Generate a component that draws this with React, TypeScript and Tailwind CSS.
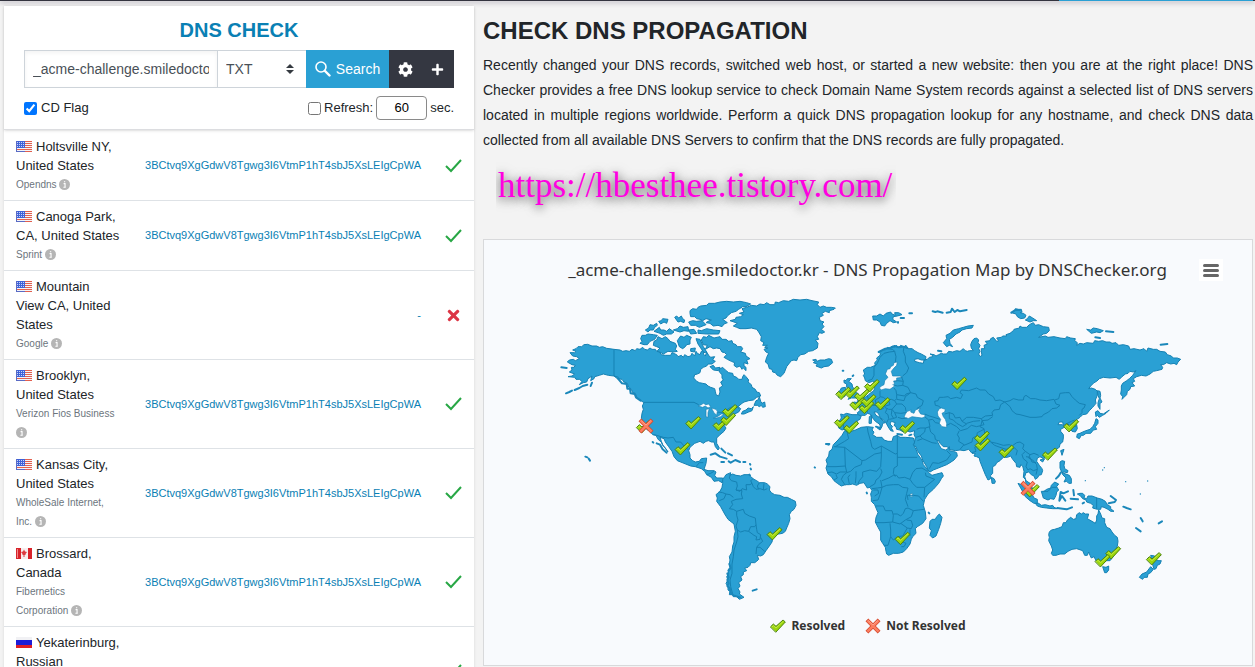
import { FaCog, FaPlus, FaTimes } from 'react-icons/fa'

type Country = 'us' | 'ca' | 'ru'

const TOKEN = '3BCtvq9XgGdwV8Tgwg3I6VtmP1hT4sbJ5XsLEIgCpWA'

const servers: { country: Country; place: string; provider: string; value: string | null }[] = [
  { country: 'us', place: 'Holtsville NY, United States', provider: 'Opendns', value: TOKEN },
  { country: 'us', place: 'Canoga Park, CA, United States', provider: 'Sprint', value: TOKEN },
  { country: 'us', place: 'Mountain View CA, United States', provider: 'Google', value: null },
  { country: 'us', place: 'Brooklyn, United States', provider: 'Verizon Fios Business', value: TOKEN },
  { country: 'us', place: 'Kansas City, United States', provider: 'WholeSale Internet, Inc.', value: TOKEN },
  { country: 'ca', place: 'Brossard, Canada', provider: 'Fibernetics Corporation', value: TOKEN },
  { country: 'ru', place: 'Yekaterinburg, Russian Federation', provider: 'Skydns', value: TOKEN },
]

function Flag({ country }: { country: Country }) {
  return (
    <svg viewBox="0 0 16 11" className="mr-1 inline-block h-[11px] w-4 align-[-1px]" aria-hidden="true">
      {country === 'us' && (
        <>
          <rect width="16" height="11" fill="#f4f4f8" />
          {[0, 2, 4, 6, 8, 10].map((y) => (
            <rect key={y} y={y} width="16" height="1" fill="#e2604f" />
          ))}
          <rect width="9" height="7" fill="#3f62d8" />
          {[1, 3, 5].map((y) => (
            <path key={y} d={`M1 ${y + 0.5}H8`} stroke="#c9d4fa" strokeWidth="1" strokeDasharray="1 1" />
          ))}
          <path d="M.5 0V11M0 10.5H9" stroke="#5a6bc4" strokeWidth="1" />
        </>
      )}
      {country === 'ca' && (
        <>
          <rect width="16" height="11" fill="#f6eeee" />
          <rect width="5" height="11" fill="#d8232a" />
          <rect x="12" width="4" height="11" fill="#d8232a" />
          <rect x="1" y="1" width="1" height="9" fill="#f0888a" />
          <path d="M8 1.5L9 3.5L11 4L9.5 6L9.5 7H8.5V9H7.5V7H6.5V6L5 4L7 3.5Z" fill="#dc3a3f" />
        </>
      )}
      {country === 'ru' && (
        <>
          <rect width="16" height="11" fill="#f1f1f4" />
          <rect y="3" width="16" height="5" fill="#1c1cd8" />
          <rect y="8" width="16" height="3" fill="#e01f26" />
        </>
      )}
    </svg>
  )
}

function InfoIcon() {
  return (
    <svg viewBox="0 0 12 12" className="inline-block h-[11px] w-[11px] align-[-2px]" aria-hidden="true">
      <circle cx="6" cy="6" r="6" fill="#b5b5b5" />
      <path d="M5 5H6.6V9M4.8 9H7.4M5.4 3H6.8" stroke="#fff" strokeWidth="1.2" fill="none" />
    </svg>
  )
}

// Puts a list of points into the map's own coordinates.
const at = (dx: number, dy: number, points: string) =>
  points
    .trim()
    .split(/\s+/)
    .map((p) => {
      const [x, y] = p.split(',').map(Number)
      return `${x + dx},${y + dy}`
    })
    .join(' ')

const west = (p: string) => at(0, 0, p)
const europe = (p: string) => at(720, 0, p)
const asia = (p: string) => at(1320, 0, p)
const south = (p: string) => at(420, 480, p)
const pacific = (p: string) => at(1320, 480, p)

const eurasia = [
  europe(`182,402 190,404 200,400 216,404 234,404 232,398 240,392 240,386 234,380 224,378 216,370 222,366 232,368 232,362 240,364 244,356 252,354 264,346 272,338 280,334 284,326
    280,318 284,308 278,304 266,308 256,302 254,294 250,286 254,282 250,270 262,262 272,262 286,256 284,248 292,240 290,234 300,226 302,220 294,216 304,214 310,208 316,210 322,202 330,204
    336,198 344,202 348,196 356,202 362,196 372,200 378,196 384,206 396,206 404,212 414,218 424,222 438,230 436,240 424,240 414,236 404,238 404,244 418,248 430,250 432,240 442,238
    448,232 458,230 456,224 450,222 462,224 468,228 476,224 484,220 490,222 500,222 506,214 518,216 530,212 540,214 550,206 556,212 562,214 568,212 580,212 574,204 572,194 576,184 582,176 590,174
    596,180 594,188 600,196 596,206 600,214 596,222 600,230 606,226 604,216 604,206 614,206 612,196 622,192 616,184 630,182 632,176 640,172 650,184
    656,182 650,174 664,172 668,168 680,168 678,164 690,160 700,152`),
  asia(`102,148 118,144 120,138 126,142 140,142 148,134 160,128 166,136 176,134 190,140 206,142 208,152 200,160 190,162 176,172 196,168 204,172 222,170 240,174 256,176 260,170
    272,174 286,176 284,182 292,188 290,196 300,190 310,192 320,188 340,190 344,182 356,184 368,182 378,186 390,186 396,190 408,188 416,196 430,194 446,198 450,208 462,206 480,210 492,206
    500,214 504,204 520,208 530,208 540,214 556,216 562,224 574,228 580,234 592,234 602,238 594,246 590,254 582,250 572,252 560,248 550,254 542,254
    548,262 546,268 530,272 520,274 510,282 498,288 484,286 470,290 460,296 464,304 456,308 464,318 452,320 450,328 442,334 440,344 432,352 426,358 428,350 422,342 424,330 424,318
    428,310 440,302 448,296 458,286 468,272 460,276 450,274 444,280 436,282 426,290 418,298 408,292 390,294 370,292
    358,296 350,304 342,308 332,318 326,326 334,324 346,328 352,334 352,346 346,360 348,370 338,382 328,392 320,402 308,404 300,412 288,420 286,428 290,434
    292,446 286,456 276,454 272,448 274,440 268,434 258,432 250,436 248,426 238,426 234,434 246,434 256,440 242,448 242,454 250,464 250,474 248,486 240,492
    238,502 228,508 220,520 208,526 196,530 190,536 180,530 172,534 170,544 178,556 186,566`),
  pacific(`188,92 184,104 176,106 174,112 166,118 162,108 154,104 146,96 138,98 134,110 138,122 150,130 158,146 148,144 138,130 136,118 130,112 132,94
    128,78 122,74 120,82 110,80 108,70 98,58 92,48 82,52 70,52 60,62 50,68 46,76 38,80 38,100 32,106 32,116 24,120 16,104 8,84 0,64`),
  europe(`600,544 598,534 590,530 582,528 586,520 576,520 566,508 552,512 540,510 526,512 508,508 502,500 490,500 480,490 476,480 472,484 478,496 484,506 496,510 504,506 508,500
    508,512 520,514 530,518 532,528 522,540 510,548 500,554 480,562 460,570 450,576 444,570 440,560 428,540 424,528 412,512 408,500 400,496 404,484 406,472 402,464
    404,452 390,456 380,452 370,456 360,450 350,448 348,440 342,436 346,428 334,424 330,432 338,440 334,444
    340,454 332,452 324,440 318,428 310,420 300,412 296,402 290,396 282,396 288,406 298,412 306,420 316,428 308,430 306,440 300,450 292,444 302,440 298,432 286,424 278,414
    270,402 262,400 256,406 244,406 240,418 232,422 230,432 222,442 210,450 202,454 192,448 186,450 176,444 178,434 176,426 184,414`),
].join(' ')

const land = [
  eurasia,
  // North America
  west(`143,193 132,194 125,200 114,200 108,206 98,210 108,214 104,218 90,218 98,228 110,230 118,236 106,242 100,238 88,240 82,246 96,254 106,256 102,262
    94,262 96,270 88,276 104,282 96,288 84,290 104,292 108,298 118,298 126,304 118,314 130,308 140,306 144,296 156,288 152,302 162,296 164,290 178,286 190,282 205,286
    222,288 232,296 246,298 252,306 262,310 266,322 274,328 278,338 286,340 290,352 300,360 312,368 307,378 310,388 306,400 304,415 308,422 308,432 316,440 320,448 330,454
    338,464 348,466 352,474 356,480
    364,486 368,496 376,504 384,516 378,508 368,494 364,484 360,472 372,476 376,486 386,500 396,514 402,530 412,542 432,550 452,558 466,560 484,566 494,574
    500,584 514,592 522,604 536,602 546,608 556,596 554,602 548,594 530,594 524,586 528,576 522,572 504,572 492,568
    498,550 500,534 484,536 478,544 466,546 458,542 450,534 450,524 446,512 450,502 464,490 480,484 490,490 498,484 506,482 514,486 522,486 526,500
    534,510 538,504 530,490 530,474 540,464 552,454 558,444 552,436 560,430 566,424 566,416 574,410 584,402 596,396 602,386 594,380 606,370 612,366
    626,362 640,360 650,352 662,348 658,338 650,336 646,328 636,322 634,314 624,306 626,300 618,290 612,284 608,290 606,298 596,298 590,292 580,288 578,280 566,278 556,270
    548,262 538,268 538,276 546,284 546,294 550,300 542,306 548,318 538,324 540,336 536,348 528,344 526,334 524,326 512,322 504,318 498,312 488,310 478,308 470,304
    461,294 464,284 472,282 480,278 482,268 490,262 500,258 504,252 516,252 526,244 518,240 524,230 512,232 506,226 500,216 496,228 490,222 492,210 484,214 480,224 472,220 468,214
    464,228 456,220 452,228 444,230 434,224 430,232 424,226 414,230 410,224 396,218 392,226 376,226 364,224 358,216 350,214 346,208 336,208 330,204 322,210
    314,208 308,202 300,208 290,206 286,212 276,208 268,214 258,212 248,214 240,210 222,208 200,205 188,200 178,202 170,198 156,198`),
  // Arctic islands
  west(`474,82 482,78 500,76 506,70 524,70 540,66 560,64 580,66 600,64 620,68 632,72 618,80 608,80 596,88 588,94 574,98 562,108 558,114 548,118 562,128 552,132 546,140 534,136 520,138
    510,130 498,128 504,124 514,120 498,116 488,122 480,118 470,116 464,110 452,110 450,100 450,92 458,86 470,88`),
  west('474,150 484,152 500,146 520,150 540,152 536,162 500,162 474,160'),
  west('342,184 350,180 354,170 366,176 376,170 384,176 390,184 406,190 410,198 406,208 412,214 400,216 384,214 370,222 352,212 360,204 350,200 340,196'),
  west('300,190 306,184 302,176 306,166 316,166 324,162 340,164 352,166 344,178 330,184 322,194 312,194'),
  west('342,154 358,142 362,150 372,150 380,154 388,146 402,156 394,162 380,162 370,166 360,160'),
  west('316,150 326,144 330,134 340,136 350,130 352,136 344,142 340,150 330,150 324,156'),
  west('356,124 364,122 368,116 384,118 380,130 372,126 362,132'),
  west('404,112 410,108 416,114 424,108 428,116 434,120 432,128 422,124 414,126'),
  west('400,150 412,146 420,138 430,142 444,140 446,154 432,152 420,156'),
  west('446,126 458,122 470,124 486,122 498,134 478,142 466,136 452,136'),
  west('412,182 422,168 432,172 440,166 454,172 450,180 450,192 440,194 436,200 428,206 418,200'),
  west('446,150 462,148 470,160 452,162'),
  west('452,206 466,204 464,216 452,214'),
  west(`484,180 490,170 500,172 506,166 522,174 540,170 546,178 558,178 566,184 576,182 578,190 588,194 592,200 604,200 608,206 602,216 616,220 618,228 630,236 620,240 624,252 612,248
    612,258 618,262 618,272 610,264 606,268 600,258 590,262 582,256 584,248 574,244 562,238 552,232 560,224 554,218 546,216 540,206 530,204 520,206 510,200 496,208 502,196 490,194`),
  west('468,176 480,178 490,200 500,216 492,218 482,204 474,192'),
  west('510,260 520,256 526,264 540,262 536,272 520,270'),
  west('604,402 608,394 618,390 624,384 634,386 640,380 636,392 626,396 612,402'),
  west('642,376 648,362 654,360 658,350 662,364 666,370 674,366 676,380 668,382 664,376 658,380 652,376'),
  // Greenland
  west(`570,122 586,118 588,112 602,110 610,104 598,100 612,96 606,86 620,82 634,76 650,78 660,72 672,74 680,68 690,74 704,74 706,66 716,68 730,62 746,64 760,58 780,60 800,58 816,62 836,66 832,74
    840,82 850,78 860,82 874,82 886,84 882,88 868,92 868,98 856,94 846,100 850,106 838,112 840,122 852,126 846,132 852,140 844,148 854,156 846,160 838,158 832,170
    836,178 826,180 834,190 832,204 818,212 806,214 794,222 782,224 774,232 770,242
    762,240 754,242 746,252 740,260 732,280 722,290 712,286 706,278 698,276 696,268 688,266 684,252 676,246 680,232 686,220 678,216 672,208 684,204 674,202 682,196 668,196 672,188 662,182 664,170
    656,156 650,148 634,144 618,146 600,146 590,142 580,138 592,130 582,126`),
  // South America
  south(`128,118 134,110 138,104 152,98 150,106 158,102 168,106 182,108 192,104 208,104 212,110 222,118 230,122 238,128 254,128 262,132 270,140 268,150 274,158 284,164 300,166
    312,172 322,172 334,178 346,184 348,196 342,208 334,214 328,224 330,236 326,250 320,264 316,274 308,280 296,282 286,286 278,296 276,306 268,318 258,332 250,344 242,348 232,346
    236,358 230,364 224,368 212,368 210,376 204,382 194,384 200,392 190,396 190,404 182,410 186,420 176,428 180,438 174,446 180,456 178,462 192,472 178,478 170,470 160,470 158,464 148,464 150,454
    144,450 144,440 138,430 144,420 140,410 146,402 144,390 150,382 148,372 150,360 148,350 156,336 158,318 162,306 162,290 166,274 162,252 144,238 134,222 122,200 110,184 112,174 108,164 120,154 126,142 128,130`),
  // Africa
  south(`474,0 486,-14 494,-28 508,-24 526,-30 544,-38 562,-40 580,-38 576,-30 582,-24 578,-16 590,-8 606,-8 612,0 624,4 636,4 640,-10 652,-14 660,-8 676,-8 700,-6 704,6 700,14 708,28 714,44 726,60 730,74
    742,88 746,98 756,106 770,102 786,98 790,108 784,116 776,130 760,148 744,162 734,178 730,196 736,216 738,236 728,250 712,260 706,266 708,280 698,290 694,298
    690,312 680,326 670,336 656,340 640,340 626,346 620,342 618,334 616,322 608,310 602,300 602,276 594,262 586,246 588,232 594,218 588,204 584,194 574,184 574,172 572,162
    576,152 570,142 562,144 552,128 540,130 530,136 518,132 508,134 496,134 484,138 472,130 462,122 454,110 444,102 438,84 442,72 438,60 446,48 448,34 456,28 460,14`),
  south('750,244 756,238 766,238 770,230 778,222 786,232 782,250 776,268 768,288 758,294 750,286 754,272 748,264'),
  europe('100,248 106,244 98,240 108,238 112,244 120,240 134,240 146,236 154,238 158,248 146,258 132,260 124,264 108,258 112,252'),
  europe('192,300 198,302 202,296 214,296 206,304 216,312 218,322 226,328 226,336 236,342 230,354 214,354 204,358 214,346 204,342 212,336 208,326 200,322 200,312 192,308'),
  europe('174,336 180,332 184,324 196,322 200,336 194,350 176,352'),
  europe('278,108 290,108 300,102 310,108 318,100 332,96 336,102 346,106 344,98 356,98 366,104 352,108 340,110 338,118 350,126 340,128 330,122 320,130 314,138 304,136 300,126 290,120 280,120'),
  europe('490,188 500,176 498,166 510,160 520,150 536,146 550,142 564,138 580,136 576,144 560,146 546,150 540,156 528,162 518,172 508,178 510,190 518,200 508,196 500,200'),
  europe('268,410 275,406 274,430 267,430'),
  asia('94,98 104,92 106,86 116,88 124,88 126,96 120,98 130,100 138,106 134,114 122,116 112,110 108,102'),
  asia('136,120 142,116 148,108 158,114 170,122 160,122 150,126'),
  asia('320,148 332,150 340,144 352,146 370,152 360,158 350,156 334,160'),
  asia('352,332 360,334 362,346 360,354 366,366 360,370 360,388 354,378 354,368 358,356 354,346'),
  asia('346,396 354,392 360,400 370,402 388,390 378,400 368,406 358,412 352,406 348,410'),
  asia('348,416 354,420 354,430 346,440 350,448 340,450 332,460 318,460 310,466 304,466 298,476 290,472 292,462 300,460 308,456 318,452 330,448 338,440 344,430'),
  asia('242,512 252,508 246,526'),
  asia('180,540 194,536 188,546'),
  pacific('34,112 42,116 46,124 44,130 36,130'),
  pacific('240,66 246,62 254,64 252,76 254,86 264,92 262,98 252,96 246,98 268,106 274,116 274,130 266,130 260,124 252,126 258,114 248,104 240,84'),
  pacific('114,130 124,134 130,142 140,150 146,160 158,166 162,174 172,178 172,190 162,190 150,182 136,170 130,158'),
  pacific('166,190 176,190 184,196 196,194 210,198 218,196 222,202 232,206 218,206 200,204 184,202 172,198'),
  pacific('184,154 192,154 200,148 212,144 214,136 224,126 236,132 230,140 236,150 230,156 228,166 222,178 212,176 204,180 190,174'),
  pacific(`292,162 300,160 308,160 314,166 312,174 320,176 324,168 336,168 352,174 366,178 376,184 382,194 392,200 392,206 402,214 392,214 384,208 372,202 364,200 362,208 352,208 338,204
    340,196 332,190 320,186 318,180 308,176 302,168`),
  pacific(`208,276 214,270 224,268 236,264 246,260 250,248 258,248 262,240 272,232 280,238 288,236 290,224 298,218 304,222 310,218 316,222 326,222 322,236 336,244 346,250 350,240 350,228 354,222 356,210 362,222 366,234
    374,236 374,248 380,262 390,266 396,276 404,286 412,292 414,304 412,318 406,332 400,350 390,362 380,362 372,368 360,364 350,366 342,350 334,354 330,346 326,336 322,346 314,346 308,332 290,326 276,328 264,334 254,342 240,342
    228,346 218,346 214,340 218,330 214,318 206,302 208,292 206,284`),
  pacific('368,380 378,382 386,378 386,390 380,398 374,398'),
  pacific('512,346 524,348 524,356 534,362 544,362 540,372 532,376 528,386 522,388 518,374'),
  pacific('512,380 520,388 512,398 504,402 502,412 492,412 488,418 478,412 486,402 500,396'),
]

const water = [
  // Baltic
  europe('352,246 342,248 340,256 332,260 330,266 322,268 316,282 324,292 314,302 312,314 304,318 298,324 304,330 316,326 330,328 344,318 342,304 350,304 350,294 368,292 360,288 338,288 334,274 342,264 350,256'),
  // Black Sea, Caspian
  europe('372,412 376,402 382,394 394,390 392,396 402,400 406,390 422,384 416,392 422,402 434,404 436,410 426,414 410,412 396,410 384,416'),
  europe('472,396 478,386 484,384 496,388 494,396 486,400 490,410 496,418 500,430 500,442 486,440 478,430 482,418 474,408'),
  // Great Lakes
  west('474,378 484,374 490,370 498,374 506,372 512,380 504,384 496,378 488,382'),
  west('498,388 508,386 504,398 504,412 498,410'),
  west('514,384 528,388 532,394 530,406 522,398'),
  west('520,414 532,410 544,402 552,402 542,410 530,414'),
  south('690,162 698,160 698,170 690,170'),
]

const borders = [
  west('222,208 222,288 236,292'),
  west('312,367 462,367 476,374'),
  west('532,396 548,398 572,382 590,378 596,386'),
  west('340,464 350,466 370,472 384,474 400,472 408,486 422,486 434,500 446,510'),
  west('468,560 478,548 490,548'),
  west('500,584 512,580 522,574'),
  south('152,100 148,114 154,122 170,126 172,138 168,150 186,152 184,162 188,176 168,178 154,184 158,194 148,206 160,208 170,214'),
  south('116,156 128,158 138,162 132,176 118,182'),
  south('138,162 150,164 160,172'),
  south('168,150 180,154 186,146 200,150 198,134 210,134 216,130 220,140 228,148 240,146 252,150 262,146'),
  south('216,130 212,122 218,118'),
  south('238,128 232,138 236,148'),
  south('252,130 250,150'),
  south('170,214 190,208 194,220 208,228 226,234 228,254 224,260 212,260 206,274 194,272 182,276 172,270 168,258 174,240 170,226 170,214'),
  south('172,270 174,290 170,306 162,330 160,350 156,372 156,400 150,420 152,440 158,462'),
  south('206,274 222,286 230,290 228,300 240,298 242,284 232,278 230,268 228,254'),
  south('242,292 248,304 236,314 230,322 228,342'),
  south('230,322 240,322 254,334'),
  south('462,20 494,22 496,78 468,80 442,80'),
  south('500,-28 506,-4 494,4 480,12 466,20'),
  south('494,22 546,62 556,60 584,42 604,38'),
  south('562,-38 564,-24 572,4 576,22 584,28 604,18'),
  south('604,18 646,42 652,40 652,-14'),
  south('652,52 712,52'),
  south('652,40 652,78 642,84 640,100 646,110'),
  south('604,18 604,48 602,80 590,94 570,90 548,96'),
  south('546,62 544,74 524,82 512,94 500,98'),
  south('496,78 500,96 480,96 470,102 456,96 442,98'),
  south('548,96 548,110 538,122 534,132'),
  south('500,98 490,106 484,118 496,136'),
  south('468,104 472,114 462,120'),
  south('510,104 504,112 508,132'),
  south('528,94 528,110 526,130'),
  south('602,86 606,96 598,112 588,120 584,132 570,140'),
  south('602,120 606,142 592,144 576,146'),
  south('606,122 626,114 640,106 650,106 656,114 674,112 690,118 698,130 710,142 734,142 764,118 738,108 736,98'),
  south('690,118 698,98 708,86 726,84 742,94'),
  south('606,142 620,136 640,134 656,134 668,142 684,144 680,160 676,178 684,200'),
  south('578,182 594,180 600,164 606,142'),
  south('580,150 594,150 596,160 584,168'),
  south('588,198 610,198 616,212 636,212 640,226 638,246 612,248 586,248'),
  south('640,222 652,222 662,228 670,220 676,206 684,204 700,212 694,230 676,240 660,252 638,246'),
  south('700,212 716,210 732,208'),
  south('684,180 682,166 700,166 716,168 730,184'),
  south('734,142 732,172'),
  south('630,250 632,270 632,290 624,316 612,316'),
  south('632,290 640,300 652,290 668,288 682,264 662,250'),
  south('682,264 694,266 698,256 694,242 680,240'),
  south('690,268 690,288'),
  south('662,314 668,306 678,310 672,320 664,320'),
  europe('264,302 276,298 282,286 282,262 292,250 300,232 312,220 328,216 344,214 348,230 346,246'),
  europe('372,198 370,214 376,230 376,246 386,264 380,278 368,288'),
  europe('344,214 338,208 322,206'),
  europe('364,290 370,304 352,302 340,304'),
  europe('370,304 368,316 352,318 338,314'),
  europe('368,316 384,322 392,338 378,342 374,348 350,344 348,332 342,324'),
  europe('300,332 300,350 310,352 320,360 334,358 344,362 350,356 350,344'),
  europe('262,346 266,360 264,368 278,376 288,374 286,360 300,352'),
  europe('278,376 294,376 310,380 330,374 326,362'),
  europe('350,358 372,362 376,350 392,338 408,342 412,352 430,362 426,376 410,386'),
  europe('344,362 350,372 336,388 326,388 314,382'),
  europe('350,372 366,372 376,382 378,394'),
  europe('336,388 344,398 362,400 378,398'),
  europe('344,398 350,412 338,416 328,418'),
  europe('322,384 316,398 324,404 326,416 320,428'),
  europe('336,388 334,404 340,414'),
  europe('292,390 304,388 312,384'),
  europe('238,380 250,386 262,390 262,398'),
  europe('234,404 244,408'),
  europe('192,408 196,420 190,432 192,448'),
  europe('354,412 366,416 382,414'),
  europe('434,410 446,420 450,440 436,444 420,444 410,448'),
  europe('434,402 448,408 462,412 480,418'),
  europe('446,420 458,418 466,428 478,430'),
  europe('482,384 476,378 466,376 464,364 474,362 478,352 490,352 504,350 512,356 530,352 542,356 548,344 540,338 544,330 566,332 590,324 600,330 616,330 626,342 640,350 646,362 660,360 674,366'),
  europe('674,366 662,374 658,388 642,390 636,398 638,406 616,408 604,416 580,412 560,412 546,424 540,412 526,414 520,402 508,398 494,402'),
  europe('508,398 508,416 520,420 530,430 548,440 560,432 546,424'),
  europe('500,436 512,430 530,440 542,452 562,446 574,436 590,440 612,434 604,416'),
  europe('560,430 580,424 600,422'),
  europe('448,440 452,456 464,466 466,478 476,484'),
  europe('538,452 532,464 538,474 536,484 552,494 540,508'),
  europe('552,496 576,486 578,474 590,468 592,458 612,448'),
  europe('436,444 434,456 420,468 428,476 412,482'),
  europe('420,468 408,472'),
  europe('428,476 456,488 470,490'),
  europe('448,566 458,548 476,550 500,540 512,524 500,512'),
  europe('576,518 588,514 584,502 600,494 608,478 606,468 620,458'),
  asia('74,366 90,362 100,356 116,360 130,360 132,350 138,346 152,356 166,356 180,360 200,362 222,358 228,372 240,376 230,384 216,386 206,396 190,404 186,410 168,412 150,412 120,404 108,402 96,392 90,380 74,366'),
  asia('224,360 236,356 240,340 256,338 268,338 276,350 286,360 298,370 316,374 312,384 306,388 306,398 298,406'),
  asia('38,410 24,420 6,422 4,432 0,440 12,446 14,460 24,462 20,474 32,486 50,490 70,496 88,494 96,498 110,488 120,486 132,494 128,506 136,514 150,524 162,520 176,526'),
  asia('32,486 44,496 60,502 78,508 92,506'),
  asia('96,506 104,504 112,512 108,526'),
  asia('136,514 126,524 130,536 142,546 138,560 144,570'),
  asia('150,524 146,534 158,540 170,554 172,568 160,572 150,566 144,570'),
  asia('138,530 150,532 156,546 168,548'),
  asia('172,568 168,584'),
  asia('258,432 266,428 274,424 284,420'),
  asia('274,442 290,438'),
  pacific('350,174 350,206'),
  pacific('190,154 204,154 216,142 230,142'),
]

// Chains of small islands and rough bits of coast, drawn as thick strokes.
const islands = [
  west('78,340 88,336 96,332'),
  west('104,330 118,324 128,318 142,314'),
  west('64,262 80,264'),
  west('156,308 152,318'),
  west('234,296 246,310 260,312 262,326 270,326 272,340 284,342 288,352 302,362'),
  west('350,490 360,494 368,508 380,518'),
  west('338,486 340,488'),
  west('136,530 142,532'),
  west('146,536 150,542'),
  west('512,524 526,520 540,530 560,536'),
  west('566,544 572,548 586,540 600,546'),
  west('544,546 552,546'),
  west('544,506 556,518'),
  west('564,520 576,526'),
  west('610,546 616,546'),
  west('630,552 631,554'),
  west('632,566 633,568'),
  west('628,584 630,586'),
  south('142,400 146,412 142,420 146,430 142,438 150,446 152,458 160,466 180,472'),
  south('148,372 152,384 146,392'),
  south('218,452 230,448'),
  south('440,12 446,14'),
  south('404,82 405,83'),
  south('560,158 561,160'),
  south('746,218 748,220'),
  europe('188,272 190,272'),
  europe('218,288 220,286'),
  europe('296,216 316,206 330,204 344,198 356,202 370,200 382,204'),
  europe('458,94 466,96 472,94 488,98'),
  europe('500,98 512,96 516,86 524,96 532,90 540,94 560,90'),
  europe('388,100 396,100'),
  europe('362,114 372,114'),
  europe('354,126 356,142'.replace('356,142', '354,128')),
  europe('474,212 484,214'),
  europe('694,98 706,90 720,90'),
  europe('352,462 366,464'),
  europe('388,466 394,464'),
  europe('288,440 300,444'),
  europe('138,492 148,492'),
  asia('378,154 400,156'),
  asia('346,172 360,174'),
  asia('542,194 562,192'),
  pacific('228,116 236,108 242,98'),
  pacific('232,204 248,206 260,208 276,202'),
  pacific('264,154 250,160 242,156 238,182 246,168 256,182'),
  pacific('280,150 282,166'),
  pacific('272,176 294,178'),
  pacific('308,190 312,188'),
  pacific('392,168 408,180 404,186 386,190'),
  pacific('430,200 440,204 452,208'),
  pacific('482,234 488,244'),
  pacific('468,264 482,274'),
  pacific('536,250 546,244'),
]

// Islets too small for an outline
const islets: [number, number][] = [
  [1636, 602], [1688, 570], [1693, 563], [1757, 605], [1823, 603], [1801, 642],
]

const resolved: [number, number][] = [
  [460, 428], [570, 392], [542, 434], [565, 418], [428, 506], [312, 440],
  [936, 336], [910, 340], [966, 346], [996, 317], [952, 372], [980, 382], [986, 362], [1028, 371],
  [906, 425], [934, 442], [1102, 442], [1258, 310], [1328, 494], [1326, 472], [1400, 514],
  [1594, 437], [1530, 522], [704, 761], [1088, 775], [1476, 632], [1720, 818], [1688, 842], [1842, 836],
]

const unresolved: [number, number][] = [
  [318, 438],
  [1464, 625],
]

function TickShape() {
  return (
    <g strokeLinejoin="round" strokeLinecap="round">
      <path d="M-22 2L-14 -6L-6 1L15 -18L22 -12L-6 18Z" fill="#9bd60a" stroke="#4e8410" strokeWidth="3" />
      <path d="M-17 2L-14 -1L-6 6L16 -14" fill="none" stroke="#d3f068" strokeWidth="2" />
    </g>
  )
}

function CrossShape() {
  return (
    <g strokeLinecap="square">
      <path d="M-14 -14L14 14M14 -14L-14 14" stroke="#d4472c" strokeWidth="12" />
      <path d="M-14 -14L14 14M14 -14L-14 14" stroke="#fb7d60" strokeWidth="8" />
      <path d="M-13 -15L0 -3L13 -15" fill="none" stroke="#ffb5a2" strokeWidth="2" />
    </g>
  )
}

function WorldMap() {
  return (
    <svg viewBox="0 6 1950 990" className="block w-full" role="img" aria-label="World map of DNS servers">
      <g fill="#2aa0d4" stroke="#1581b3" strokeWidth="3" strokeLinejoin="round">
        {land.map((points, i) => (
          <polygon key={i} points={points} />
        ))}
      </g>
      <g fill="#f8fafd" stroke="#1581b3" strokeWidth="2">
        {water.map((points, i) => (
          <polygon key={i} points={points} />
        ))}
      </g>
      <g fill="none" stroke="#1581b3" strokeWidth="3" strokeLinejoin="round">
        {borders.map((points, i) => (
          <polyline key={i} points={points} />
        ))}
      </g>
      <g fill="none" stroke="#1a87ba" strokeWidth="6" strokeLinejoin="round" strokeLinecap="round">
        {islands.map((points, i) => (
          <polyline key={i} points={points} />
        ))}
      </g>
      {islets.map(([x, y], i) => (
        <circle key={i} cx={x} cy={y} r="2" fill="#1a87ba" />
      ))}
      {resolved.map(([x, y], i) => (
        <g key={i} transform={`translate(${x} ${y})`}>
          <TickShape />
        </g>
      ))}
      {unresolved.map(([x, y], i) => (
        <g key={i} transform={`translate(${x} ${y})`}>
          <CrossShape />
        </g>
      ))}
    </svg>
  )
}

function SearchPanel() {
  return (
    <form className="border-b border-[#dcdde0] px-5 pt-[11px] shadow-sm" onSubmit={(e) => e.preventDefault()}>
      <h1 className="text-center text-[20px] leading-[26px] font-bold text-[#0a80b4]">DNS CHECK</h1>
      <div className="mt-[7px] flex h-[38px]">
        <input
          type="text"
          aria-label="Domain name"
          defaultValue="_acme-challenge.smiledoctor.kr"
          className="min-w-0 flex-1 border border-[#ced4da] px-2 text-[14px] text-[#495057] shadow-inner outline-none"
        />
        <div className="relative w-[88px]">
          <select
            aria-label="Record type"
            defaultValue="TXT"
            className="h-full w-full appearance-none border-y border-[#ced4da] bg-white pl-2 text-[14px] text-[#495057] outline-none"
          >
            <option>A</option>
            <option>TXT</option>
            <option>MX</option>
          </select>
          <svg viewBox="0 0 8 10" className="pointer-events-none absolute top-[14px] right-3 h-[10px] w-2" aria-hidden="true">
            <path d="M4 0L8 4H0ZM4 10L8 6H0Z" fill="#343a40" />
          </svg>
        </div>
        <button type="submit" className="flex w-[83px] items-center justify-center gap-[5px] bg-[#2aa0d4] text-[14px] text-white">
          <svg viewBox="0 0 16 16" className="h-4 w-4" fill="none" stroke="currentColor" aria-hidden="true">
            <circle cx="6" cy="6" r="5" strokeWidth="1.6" />
            <path d="M10 10L14.5 14.5" strokeWidth="2.4" strokeLinecap="round" />
          </svg>
          Search
        </button>
        <button type="button" aria-label="Settings" className="flex w-8 items-center justify-center bg-[#343741] text-white">
          <FaCog size={15} />
        </button>
        <button type="button" aria-label="Add server" className="flex w-[33px] items-center justify-center bg-[#343741] text-white">
          <FaPlus size={13} />
        </button>
      </div>
      <div className="flex items-center justify-between pt-2 pb-[9px] text-[13px] leading-6 text-[#212529]">
        <label className="flex items-center gap-1">
          <input type="checkbox" defaultChecked className="h-[13px] w-[13px] accent-[#0075ff]" />
          CD Flag
        </label>
        <div className="flex items-center gap-[3px]">
          <input id="refresh" type="checkbox" className="h-[13px] w-[13px]" />
          <label htmlFor="refresh">Refresh:</label>
          <input
            type="text"
            aria-label="Refresh seconds"
            defaultValue="60"
            className="h-6 w-[51px] rounded-[4px] border border-[#8a8a8a] text-center text-[13px] text-black outline-none"
          />
          <span>sec.</span>
        </div>
      </div>
    </form>
  )
}

function ServerList() {
  return (
    <table className="mt-px w-full">
      <tbody>
        {servers.map((server) => (
          <tr key={server.place} className="border-b border-[#dee2e6]">
            <td className="py-[6px] pl-3 align-top text-[13px] leading-[19px] text-[#212529]">
              <div className="w-[104px]">
                <Flag country={server.country} />
                {server.place}
              </div>
              <div className="w-[100px] text-[10px] leading-[19px] text-[#6c757d]">
                {server.provider} <InfoIcon />
              </div>
            </td>
            <td className="text-right text-[11px] text-[#0a80b4]">{server.value ?? '-'}</td>
            <td className="w-[53px] pr-3 pl-6">
              {server.value ? (
                <svg viewBox="0 0 17 14" className="h-[14px] w-[17px]" role="img" aria-label="Resolved">
                  <path d="M1 7L6 12L16 1" fill="none" stroke="#28a745" strokeWidth="2" />
                </svg>
              ) : (
                <FaTimes size={17} className="text-[#dc3545]" aria-label="Not resolved" />
              )}
            </td>
          </tr>
        ))}
      </tbody>
    </table>
  )
}

function PropagationMap() {
  return (
    <section className="border border-[#d8d9db] bg-[#f8fafd] px-1 pb-[29px]">
      <div className="flex items-center pt-[18px]">
        <h3 className="flex-1 pl-12 text-center font-['Noto_Sans','Open_Sans',sans-serif] text-[17px] leading-6 text-[#333]">
          _acme-challenge.smiledoctor.kr - DNS Propagation Map by DNSChecker.org
        </h3>
        <button type="button" aria-label="Chart menu" className="mr-[25px] flex h-[22px] w-6 flex-col items-center justify-center gap-[2px] bg-white">
          <span className="h-[3px] w-4 rounded-full bg-[#666]" />
          <span className="h-[3px] w-4 rounded-full bg-[#666]" />
          <span className="h-[3px] w-4 rounded-full bg-[#666]" />
        </button>
      </div>
      <div className="pr-[58px] pl-[52px]">
        <WorldMap />
      </div>
      <div className="flex justify-center gap-5 pt-1 font-['Noto_Sans','Open_Sans',sans-serif] text-[12px] leading-5 font-bold text-[#333]">
        <span className="flex items-center gap-[5px]">
          <svg viewBox="-24 -21 48 42" className="h-[14px] w-4" aria-hidden="true">
            <TickShape />
          </svg>
          Resolved
        </span>
        <span className="flex items-center gap-[5px]">
          <svg viewBox="-24 -24 48 48" className="h-4 w-4" aria-hidden="true">
            <CrossShape />
          </svg>
          Not Resolved
        </span>
      </div>
    </section>
  )
}

export default function App() {
  return (
    <div className="h-screen overflow-hidden bg-[#f3f3f3] font-['Liberation_Sans',Arial,sans-serif]">
      <div className="flex h-px bg-[#33343f] shadow-[0_1px_5px_rgba(40,30,60,0.8)]">
        <div className="mr-[2px] ml-auto w-[194px] bg-[#2aa0d4]" />
      </div>
      <div className="flex gap-[9px] pt-[5px] pr-[2px] pl-1">
        <aside className="w-[470px] shrink-0 bg-white shadow-sm">
          <SearchPanel />
          <ServerList />
        </aside>
        <main className="min-w-0 flex-1 pt-[9px]">
          <h2 className="text-[24px] leading-8 font-bold text-[#212529]">CHECK DNS PROPAGATION</h2>
          <p className="mt-[6px] text-justify text-[14px] leading-[25px] text-[#212529]">
            Recently changed your DNS records, switched web host, or started a new website: then you are at the right place! DNS
            Checker provides a free DNS lookup service to check Domain Name System records against a selected list of DNS servers
            located in multiple regions worldwide. Perform a quick DNS propagation lookup for any hostname, and check DNS data
            collected from all available DNS Servers to confirm that the DNS records are fully propagated.
          </p>
          <div className="mt-[9px] mb-[21px] ml-[13px] flex h-[56px] w-[400px] items-start overflow-hidden">
            <a
              href="https://hbesthee.tistory.com/"
              className="pl-[2px] font-['Liberation_Serif',serif] text-[35px] leading-[48px] whitespace-nowrap text-[#ff00e0] [text-shadow:0_3px_8px_rgba(0,0,0,0.45),0_2px_14px_rgba(0,0,0,0.4)]"
            >
              https://hbesthee.tistory.com/
            </a>
          </div>
          <PropagationMap />
        </main>
      </div>
    </div>
  )
}
